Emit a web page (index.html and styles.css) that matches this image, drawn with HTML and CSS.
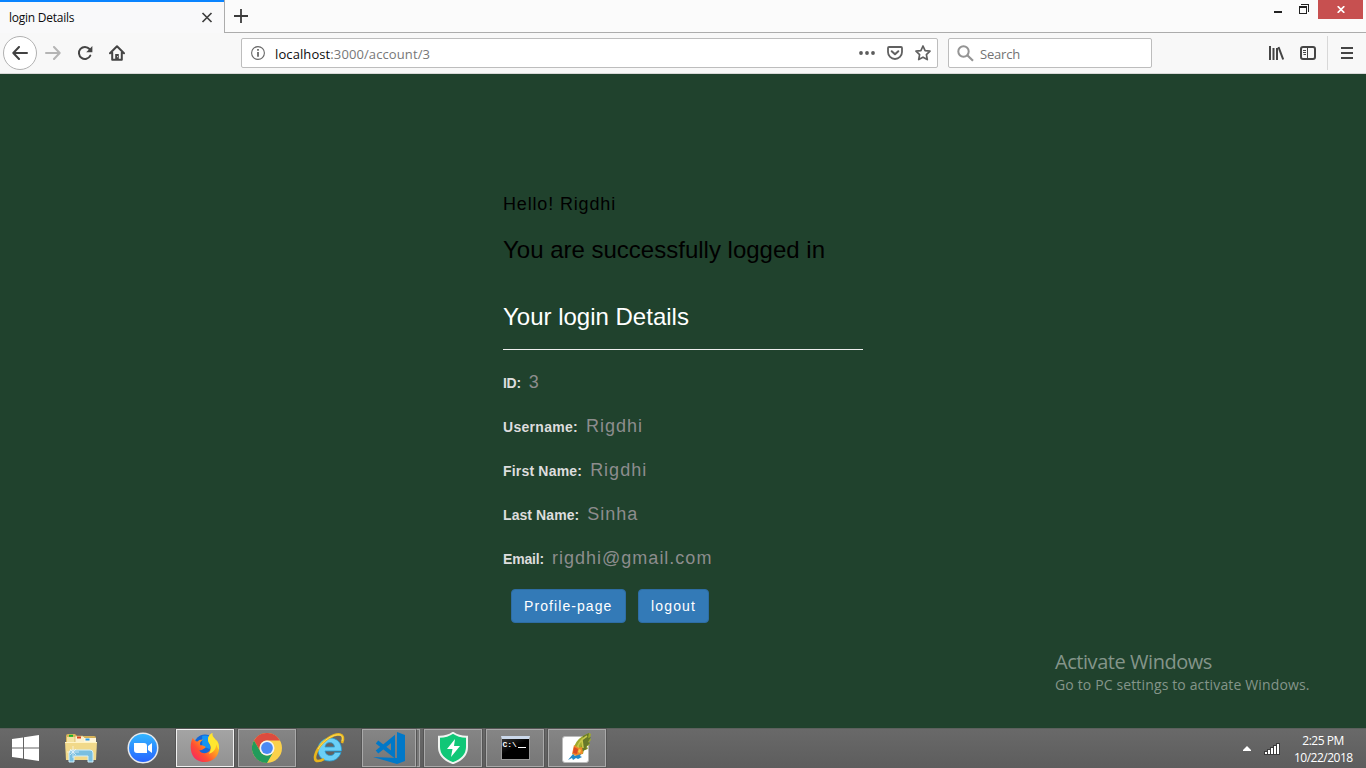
FILE: index.html
```html
<!DOCTYPE html>
<html lang="en">
<head>
<meta charset="utf-8">
<title>login Details</title>
<link rel="stylesheet" href="styles.css">
</head>
<body>
<div class="screen">
  <header class="tabbar">
    <div class="tab"><span class="tab-title">login Details</span>
      <svg class="tab-close" width="12" height="12" viewBox="0 0 12 12"><path d="M1.500 1l9 9M10.500 1l-9 9" stroke="#3f3f3f" stroke-width="1.700"/></svg>
    </div>
    <div class="tabstrip">
      <svg class="newtab" width="14" height="14" viewBox="0 0 14 14"><path d="M7 0v14M0 7h14" stroke="#3c3c3c" stroke-width="1.800"/></svg>
      <div class="winctl">
        <svg class="min" width="8" height="2"><path d="M0 1h8" stroke="#222" stroke-width="2"/></svg>
        <svg class="max" width="10" height="10" viewBox="0 0 10 10" fill="none" stroke="#222" shape-rendering="crispEdges"><path d="M2 .5h7.500V8"/><path d="M.5 2.500h7v7h-7z"/><path d="M0 3.500h8"/></svg>
        <div class="close"><svg width="8" height="7" viewBox="0 0 8 7"><path d="M.7.2l6.600 6.600M7.300.2L.7 6.800" stroke="#fff" stroke-width="1.700"/></svg></div>
      </div>
    </div>
  </header>

  <nav class="toolbar">
    <div class="back"><svg width="16" height="14" viewBox="0 0 16 14" fill="none" stroke="#414141" stroke-width="2" stroke-linecap="round" stroke-linejoin="round"><path d="M15 7H1.500M7 1L1.300 7 7 13"/></svg></div>
    <svg class="forward" width="16" height="14" viewBox="0 0 16 14" fill="none" stroke="#b5b5b5" stroke-width="2" stroke-linecap="round" stroke-linejoin="round"><path d="M1 7h13.500M9 1l5.700 6L9 13"/></svg>
    <svg class="reload" width="16" height="16" viewBox="0 0 16 16"><path d="M13.300 10.600A6 6 0 1 1 12.500 4" fill="none" stroke="#454545" stroke-width="2" stroke-linecap="round"/><path d="M15.400 1v6.300H9.200z" fill="#454545"/></svg>
    <svg class="home" width="16" height="16" viewBox="0 0 16 16"><path d="M1 8.200L8 1.200l7 7M3.200 7.500v7.300h9.600V7.500" fill="none" stroke="#454545" stroke-width="2" stroke-linecap="round" stroke-linejoin="round"/><path d="M6.200 9h3.600v6H6.200z" fill="#454545"/><path d="M8 11.700h1" stroke="#eee"/></svg>
    <div class="urlbar">
      <svg class="info" width="14" height="14" viewBox="0 0 14 14"><circle cx="7" cy="7" r="6.400" fill="none" stroke="#686868" stroke-width="1.100"/><path d="M7 6v4.700M7 3v1.700" stroke="#606060" stroke-width="1.700"/></svg>
      <span class="url"><b>localhost</b>:3000/account/3</span>
      <svg class="dots" width="16" height="4" viewBox="0 0 16 4" fill="#5c5c5c"><circle cx="2" cy="2" r="1.900"/><circle cx="8" cy="2" r="1.900"/><circle cx="14" cy="2" r="1.900"/></svg>
      <svg class="pocket" width="16" height="14" viewBox="0 0 16 14" fill="none" stroke="#606060" stroke-width="1.800" stroke-linecap="round" stroke-linejoin="round"><path d="M2 1h12q1 0 1 1v4a7 7 0 0 1-14 0V2q0-1 1-1z"/><path d="M4.700 5.200L8 8.300l3.300-3.100" stroke-width="2"/></svg>
      <svg class="star" width="16" height="16" viewBox="0 0 16 16" fill="none" stroke="#606060" stroke-width="1.700" stroke-linejoin="round"><path d="M8 1l2.100 4.600 4.900.6-3.600 3.400.9 5L8 12.200l-4.300 2.400.9-5L1 6.200l4.900-.6z"/></svg>
    </div>
    <div class="search">
      <svg width="17" height="17" viewBox="0 0 17 17" fill="none" stroke="#949494"><circle cx="6.500" cy="6.500" r="5.200" stroke-width="2"/><path d="M10.300 10.300l5.700 5.500" stroke-width="2.200"/></svg>
      <span>Search</span>
    </div>
    <svg class="library" width="16" height="14" viewBox="0 0 16 14" stroke="#454545"><path d="M2 0v14M5.500 2v12M9 2v12" stroke-width="2"/><path d="M10.500 1l4.700 12.500" stroke-width="2"/></svg>
    <svg class="sidebar" width="16" height="14" viewBox="0 0 16 14" fill="none" stroke="#454545"><rect x="1" y="1" width="14" height="12" rx="2" stroke-width="2"/><path d="M7.500 1.500v11M3 4.500h3M3 6.500h3M3.500 8.500H6"/></svg>
    <div class="menu"><svg width="12" height="12" viewBox="0 0 12 12" stroke="#454545" stroke-width="2"><path d="M0 1h12M0 6h12M0 11h12"/></svg></div>
  </nav>

  <main class="page">
    <section class="account">
      <p class="hello">Hello! Rigdhi</p>
      <h3 class="success">You are successfully logged in</h3>
      <h3 class="heading">Your login Details</h3>
      <dl class="details">
        <div class="row id"><dt>ID:</dt><dd>3</dd></div>
        <div class="row username"><dt>Username:</dt><dd>Rigdhi</dd></div>
        <div class="row first"><dt>First Name:</dt><dd>Rigdhi</dd></div>
        <div class="row last"><dt>Last Name:</dt><dd>Sinha</dd></div>
        <div class="row email"><dt>Email:</dt><dd>rigdhi@gmail.com</dd></div>
      </dl>
      <div class="actions"><a class="btn profile">Profile-page</a><a class="btn logout">logout</a></div>
    </section>
    <aside class="activate"><div class="act-title">Activate Windows</div><div class="act-text">Go to PC settings to activate Windows.</div></aside>
  </main>

  <footer class="taskbar">
    <div class="start"><svg width="27" height="26" viewBox="0 0 27 26" fill="#fff"><path d="M0 4l11-1.600v10H0zM12 2.200L27 0v12.400H12zM0 13.500h11v10L0 22zM12 13.500h15V26l-15-2.300z"/></svg></div>
    <div class="task"><svg width="34" height="32" viewBox="0 0 34 32">
      <path d="M2 4q0-2 2-2h7l2 2h17q2 0 2 2v22H2z" fill="#d9b55b"/>
      <path d="M3 5h10l2 2h15v20H3z" fill="#f4e2a0"/>
      <path d="M5 2.800h4v2H5z" fill="#16b52b"/><path d="M11 4h8l2 2h10v7H11z" fill="#fbf1cc" stroke="#c9a64d" stroke-width=".6"/>
      <path d="M13 4.500h4v2h-4z" fill="#d9441f"/><path d="M20 6h12v6H20z" fill="#fff6da"/><path d="M21.500 6.500h4v2h-4z" fill="#289be8"/>
      <path d="M1 10h32l-1 18H2z" fill="#f1d98a"/><path d="M1 10.500h32" stroke="#fff3c4"/>
      <path d="M5 30V21q0-3 3-3h18q3 0 3 3v9h-5v-6H10v6z" fill="#79bfe0" stroke="#d2effa"/>
      <path d="M9 14v12M3 20h12M6 17l6 6M12 17l-6 6" stroke="#fff" stroke-width=".7" opacity=".85"/>
    </svg></div>
    <div class="task"><svg width="32" height="32" viewBox="0 0 32 32"><defs><linearGradient id="zoom" x2="0" y2="1"><stop stop-color="#32b6ff"/><stop offset="1" stop-color="#2864ff"/></linearGradient></defs><circle cx="16" cy="16" r="15.500" fill="#e8eaed"/><circle cx="16" cy="16" r="14" fill="url(#zoom)"/><path d="M7 11h10q3 0 3 3v7H10q-3 0-3-3zM21 14l4-3v10l-4-3z" fill="#fff"/></svg></div>
    <div class="task open active"><svg width="30" height="30" viewBox="0 0 32 32">
      <defs><linearGradient id="fox" x1="1" y1="0" x2="0" y2="1"><stop stop-color="#fff23a"/><stop offset=".35" stop-color="#ffac1f"/><stop offset=".65" stop-color="#ff5032"/><stop offset="1" stop-color="#f21870"/></linearGradient></defs>
      <circle cx="16" cy="13" r="11.500" fill="#1467d8"/><path d="M13 3q8-2 10 5l-2 9-8-3z" fill="#1494f4"/>
      <path d="M3 5q-3 6-2 13c1 8 7 13 15 13s15-6 15-15c0-4-1-7-4-9-2-3-4-4-3-7-4 2-6 6-4 10 2 3 3 5 1 9-3 4-10 3-11-1 3 1 4-1 6-2 2-1-1-3-5-3-1-2 0-4 3-6-3 0-5 1-6 2-2 0-4-2-5-4z" fill="url(#fox)"/><path d="M24 0c-4 2-6 6-4 10 3 4 3 8 0 12 5-1 8-5 8-10 1 3 2 5 3 6 0-5-1-9-4-11-2-3-4-4-3-7z" fill="#ffe72f"/>
    </svg></div>
    <div class="task open"><svg width="30" height="30" viewBox="0 0 30 30"><circle cx="15" cy="15" r="15" fill="#fbd14b"/><path d="M2 7.500A15 15 0 0 1 28 7.500H15a7.500 7.500 0 0 0-6.500 11.200z" fill="#dc4c3f"/><path d="M2 7.500A15 15 0 0 0 15 30l6.500-11.200a7.500 7.500 0 0 1-13 0z" fill="#229b5b"/><circle cx="15" cy="15" r="7.500" fill="#f4f4f4"/><circle cx="15" cy="15" r="5.900" fill="#4a89f3"/></svg></div>
    <div class="task"><svg width="32" height="32" viewBox="0 0 32 32">
      <path d="M28 20.500C26 26 22 29 16.500 29 9 29 5 24 5 17.500S10 6 17 6s12 5 11.500 13H12c.5 3 2.500 4.500 5.500 4.500 2.200 0 3.500-1 4.200-3zM12 15h9.500c-.3-3-2-4.400-4.700-4.400S12.500 12 12 15z" fill="#6bd0f7" stroke="#279dd3" stroke-width=".8"/>
      <path d="M29 11c2-5 1-8-2-8.500C21 1.500 10 8 5 17c-4 7-4 12 0 12q3 0 6-2" fill="none" stroke="#e9b51d" stroke-width="2.600"/><path d="M29 9c1-4 0-5.500-2-6C21 1.500 10 8 5 17" fill="none" stroke="#ffe260"/>
    </svg></div>
    <div class="task-group">
      <div class="task open code"><svg width="32" height="32" viewBox="0 0 32 32"><path d="M24 0l8 3v26l-8 3L0 25l24 1z" fill="#0078c8"/><path d="M4 10l16 12.500V7L4 20" fill="none" stroke="#0078c8" stroke-width="4"/></svg></div>
      <div class="stack"></div>
    </div>
    <div class="task open"><svg width="32" height="32" viewBox="0 0 32 32"><path d="M16 .8Q22 5 30 4.800V15q0 11-14 16.200Q2 26 2 15V4.800Q10 5 16 .8z" fill="#10c777" stroke="#f1f4f1" stroke-width="2"/><path d="M18 7l-8 10h5.500l-1.500 8 9-11h-6z" fill="#fff"/></svg></div>
    <div class="task open"><div class="console"><span>C:\</span><i></i></div></div>
    <div class="task open"><svg width="32" height="32" viewBox="0 0 32 32"><rect x="1.500" y="4.500" width="26" height="26" rx="2.500" fill="#fff" stroke="#bbb"/>
      <path d="M13 23C11 13 17 5 28 1l2 1-1 4 1 2-2 2 1 3-3 1 1 3-4 1-1 4z" fill="#9eaa2e"/>
      <path d="M22 4l6-3-1 5 3-1-3 5 2 1-4 4 1 2-6 3z" fill="#66782a"/>
      <path d="M15 20q2-11 11-16M17 13l1 6M21 8l1 8" stroke="#c7c74a" fill="none" stroke-width="1.600"/>
      <path d="M13 13l5 3 3-1 1 6-5 4-6-3z" fill="#ef882a"/><path d="M13 15l4 2-1 5-4-1z" fill="#dd4d24"/><path d="M18 17l2 1-1 3-2-1z" fill="#f7cd42"/>
      <path d="M7 28l5-6 2 2 6-2-1 2 2 1-4 2-2-1-3 2-1-2z" fill="#2389c6"/></svg></div>
    <div class="tray">
      <svg class="up" width="8" height="5" viewBox="0 0 8 5"><path d="M4 0l4 4v1H0V4z" fill="#fff"/></svg>
      <svg class="signal" width="16" height="12" viewBox="0 0 16 12"><path d="M0 8h3V6h3V4h3V2h3V0h4v12H0z" fill="#3b3b3b"/><path d="M1 9h2v2H1zM4 7h2v4H4zM7 5h2v6H7zM10 3h2v8h-2zM13 1h2v10h-2z" fill="#fff"/></svg>
      <div class="clock"><div class="time">2:25 PM</div><div class="date">10/22/2018</div></div>
    </div>
  </footer>
</div>
</body>
</html>
```
FILE: styles.css
```css
* { box-sizing: border-box; }
body { margin: 0; font-family: "Liberation Sans", Arial, sans-serif; }
svg { display: block; flex: none; }
p, h3, dl, dd { margin: 0; }
.screen { width: 1366px; height: 768px; display: flex; flex-direction: column; overflow: hidden; }

.tabbar { height: 33px; display: flex; background: #f9f9fa; font-family: "Open Sans", sans-serif; }
.tab { width: 224px; border-top: 2px solid #0a84ff; display: flex; align-items: center; justify-content: space-between; padding: 0 11px 0 9px; }
.tab-title { font-size: 12px; letter-spacing: -0.25px; color: #0c0c0d; }
.tabstrip { flex: 1; display: flex; justify-content: space-between; border-left: 1px solid #acacac; border-bottom: 1px solid #acacac; background: #fbfbfb; }
.newtab { margin: 9px 0 0 9px; }
.winctl { display: flex; }
.min { margin: 11px 17px 0 0; }
.max { margin: 4px 9px 0 0; }
.close { width: 45px; height: 19px; margin-right: 3px; background: #c75050; display: flex; align-items: center; justify-content: center; }

.toolbar { height: 41px; display: flex; align-items: center; background: #f8f8f8; border-bottom: 1px solid #d8d8d8; padding-left: 3px; font-family: "Open Sans", sans-serif; }
.back { width: 34px; height: 34px; border: 1px solid #b1b1b1; border-radius: 50%; background: #fff; display: flex; align-items: center; justify-content: center; }
.forward { margin-left: 8px; }
.reload { margin-left: 16px; }
.home { margin-left: 16px; }
.urlbar, .search { height: 30px; border: 1px solid #bdbdbd; border-radius: 2px; background: #fff; display: flex; align-items: center; }
.urlbar { width: 697px; margin-left: 116px; padding: 0 6px 0 9px; }
.url { margin-left: 10px; padding-top: 2px; font-size: 13px; letter-spacing: 0.1px; color: #777; flex: 1; }
.url b { font-weight: 400; color: #0c0c0d; }
.pocket { margin-left: 12px; }
.star { margin-left: 12px; }
.search { width: 204px; margin-left: 10px; padding-left: 8px; font-size: 13px; letter-spacing: -0.2px; color: #737373; }
.search span { margin-left: 6px; padding-top: 2px; }
.library { margin-left: 116px; }
.sidebar { margin-left: 16px; }
.menu { margin-left: 11px; height: 34px; border-left: 1px solid #d8d8d8; display: flex; align-items: center; padding-left: 13px; }

.page { height: 654px; background: #20422d; display: flex; justify-content: center; padding-top: 117px; position: relative; }
.account { width: 360px; }
.hello { font-size: 18px; line-height: 26px; letter-spacing: 0.84px; color: #000; }
.success, .heading { font-size: 24px; font-weight: 500; line-height: 26px; white-space: nowrap; }
.success { margin-top: 20px; color: #000; }
.heading { margin-top: 41px; height: 46px; border-bottom: 1px solid #eee; color: #fff; }
.details { margin-top: 19px; display: flex; flex-direction: column; gap: 18px; }
.row { height: 26px; line-height: 26px; display: flex; align-items: baseline; }
.row dt { font-size: 14px; font-weight: 700; color: #ddd; }
.row dd { margin-left: 8px; font-size: 18px; letter-spacing: 1px; color: #8d8d8d; }
.id dt { letter-spacing: -0.3px; }
.username dt { letter-spacing: 0.3px; }
.first dt { letter-spacing: 0.19px; }
.last dt { letter-spacing: 0.08px; }
.email dt { letter-spacing: -0.16px; }
.actions { margin-top: 18px; padding-left: 8px; display: flex; gap: 12px; }
.btn { height: 34px; padding: 6px 12px; border: 1px solid #2e6da4; border-radius: 4px; background: #337ab7; color: #fff; font-size: 14px; line-height: 20px; letter-spacing: 1.08px; white-space: nowrap; }
.profile { width: 115px; }
.logout { width: 71px; letter-spacing: 1.15px; }
/* system watermark floating over the desktop */
.activate { position: absolute; left: 1055px; top: 574px; color: #84958a; font-family: "Open Sans", sans-serif; white-space: nowrap; }
.act-title { font-size: 20px; line-height: 28px; letter-spacing: -0.45px; }
.act-text { font-size: 14px; line-height: 18px; letter-spacing: 0.14px; }

.taskbar { height: 40px; display: flex; background: linear-gradient(#696969, #5d5d5d); border-top: 1px solid #5c605d; }
.start { width: 52px; padding: 6px 0 0 12px; }
.task { width: 58px; height: 38px; margin-right: 4px; display: flex; align-items: center; justify-content: center; }
.open { border: 1px solid #a9a9a9; background: linear-gradient(#858585, #777); outline: 1px solid #555; }
.active { border-color: #f0f0f0; background: linear-gradient(#a4a4a4, #929292); }
.task-group { width: 58px; margin-right: 4px; display: flex; }
.code { width: 54px; margin: 0; }
.stack { width: 4px; height: 38px; border: 1px solid #a9a9a9; border-left: 1px solid #555; background: #777; }
.console { width: 29px; height: 24px; background: linear-gradient(150deg, #333, #000 45%); border: 1px solid #999; border-top: 3px solid #cbd8ea; color: #fff; font: 700 8px/9px "Liberation Mono", monospace; padding: 1px 0 0 1px; display: flex; }
.console i { width: 8px; height: 8px; border-bottom: 1px solid #fff; margin-left: 1px; }
.tray { margin-left: auto; display: flex; align-items: center; padding-right: 14px; color: #fff; font-family: "Open Sans", sans-serif; }
.up { margin-right: 13px; }
.clock { width: 58px; margin-left: 14px; font-size: 12px; line-height: 17px; letter-spacing: -0.5px; text-align: center; white-space: nowrap; }
```
